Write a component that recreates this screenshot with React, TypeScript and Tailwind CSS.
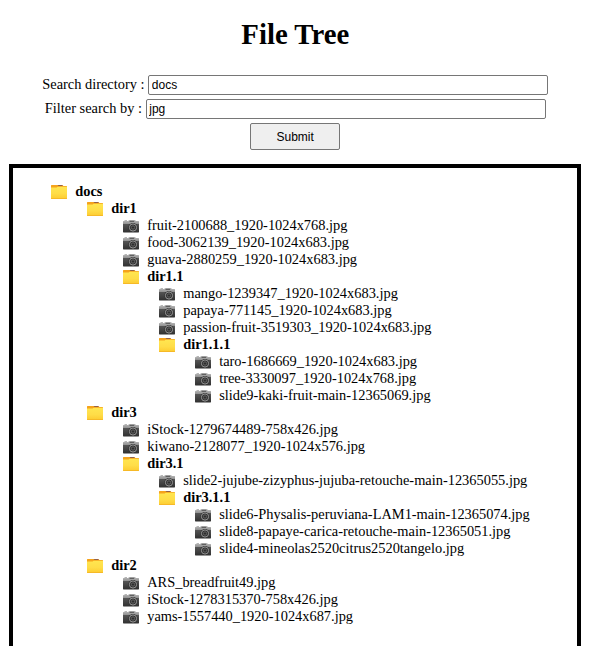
type Node = { name: string; children?: Node[] };

const tree: Node = {
  name: 'docs',
  children: [
    {
      name: 'dir1',
      children: [
        { name: 'fruit-2100688_1920-1024x768.jpg' },
        { name: 'food-3062139_1920-1024x683.jpg' },
        { name: 'guava-2880259_1920-1024x683.jpg' },
        {
          name: 'dir1.1',
          children: [
            { name: 'mango-1239347_1920-1024x683.jpg' },
            { name: 'papaya-771145_1920-1024x683.jpg' },
            { name: 'passion-fruit-3519303_1920-1024x683.jpg' },
            {
              name: 'dir1.1.1',
              children: [
                { name: 'taro-1686669_1920-1024x683.jpg' },
                { name: 'tree-3330097_1920-1024x768.jpg' },
                { name: 'slide9-kaki-fruit-main-12365069.jpg' },
              ],
            },
          ],
        },
      ],
    },
    {
      name: 'dir3',
      children: [
        { name: 'iStock-1279674489-758x426.jpg' },
        { name: 'kiwano-2128077_1920-1024x576.jpg' },
        {
          name: 'dir3.1',
          children: [
            { name: 'slide2-jujube-zizyphus-jujuba-retouche-main-12365055.jpg' },
            {
              name: 'dir3.1.1',
              children: [
                { name: 'slide6-Physalis-peruviana-LAM1-main-12365074.jpg' },
                { name: 'slide8-papaye-carica-retouche-main-12365051.jpg' },
                { name: 'slide4-mineolas2520citrus2520tangelo.jpg' },
              ],
            },
          ],
        },
      ],
    },
    {
      name: 'dir2',
      children: [
        { name: 'ARS_breadfruit49.jpg' },
        { name: 'iStock-1278315370-758x426.jpg' },
        { name: 'yams-1557440_1920-1024x687.jpg' },
      ],
    },
  ],
};

function Defs() {
  return (
    <svg className="absolute size-0" aria-hidden="true">
      <defs>
        <linearGradient id="folder" x1="0" y1="0" x2="0" y2="1">
          <stop offset="0" stopColor="#ffe650" />
          <stop offset="0.55" stopColor="#ffdd48" />
          <stop offset="1" stopColor="#fdcb30" />
        </linearGradient>
        <linearGradient id="camTop" x1="0" y1="0" x2="0" y2="1">
          <stop offset="0" stopColor="#bcbcbc" />
          <stop offset="1" stopColor="#909090" />
        </linearGradient>
        <linearGradient id="camBody" x1="0" y1="0" x2="0" y2="1">
          <stop offset="0" stopColor="#555555" />
          <stop offset="1" stopColor="#303030" />
        </linearGradient>
      </defs>
    </svg>
  );
}

function FolderIcon() {
  return (
    <svg width="16" height="17" viewBox="0 0 16 17" className="shrink-0">
      <path d="M0 2.4Q0 2 .4 2H11.5L12.4 3H15.6Q16 3 16 3.4V15H0Z" fill="#f5a31c" />
      <path d="M6.5 2H11L11.8 3H7.5Z" fill="#93604a" />
      <path d="M0 4.4H5.6L6.6 3.8H16V15.5Q16 16 15.5 16H.5Q0 16 0 15.5Z" fill="url(#folder)" />
      <path d="M0 15.2H16V15.6Q16 16 15.5 16H.5Q0 16 0 15.6Z" fill="#f3b324" />
    </svg>
  );
}

function CameraIcon() {
  return (
    <svg width="16" height="17" viewBox="0 0 16 17" className="shrink-0">
      <path d="M1.5 3.3H4V4H1.5Z" fill="#999999" />
      <path d="M0 4.5Q0 4 .5 4H5L6.2 3H12L13 4H15.5Q16 4 16 4.5V7H0Z" fill="url(#camTop)" />
      <path d="M6.8 3.8H11.2V5H6.4Z" fill="#606060" />
      <path d="M0 7H16V14.8Q16 15.4 15.4 15.4H.6Q0 15.4 0 14.8Z" fill="url(#camBody)" />
      <circle cx="10" cy="10.5" r="4.6" fill="#303030" />
      <circle cx="10" cy="10.5" r="3.6" fill="none" stroke="#999999" strokeWidth="1" />
      <circle cx="10" cy="10.5" r="2.5" fill="#2e2e2e" />
      <circle cx="10" cy="10.5" r="1.7" fill="none" stroke="#777777" strokeWidth="0.7" />
    </svg>
  );
}

function TreeItem({ node }: { node: Node }) {
  return (
    <li>
      <div className="flex h-[17px] items-center gap-[8.2px] whitespace-nowrap">
        {node.children ? <FolderIcon /> : <CameraIcon />}
        <span className={node.children ? 'font-bold' : ''}>{node.name}</span>
      </div>
      {node.children && (
        <ul className="pl-9">
          {node.children.map((child) => (
            <TreeItem key={child.name} node={child} />
          ))}
        </ul>
      )}
    </li>
  );
}

function Field({ label, value }: { label: string; value: string }) {
  return (
    <label className="flex h-5 items-center justify-center gap-[3.6px]">
      <span className="pb-0.5">{label}</span>
      <input
        defaultValue={value}
        className="h-5 w-[400px] rounded-[2px] border border-[#767676] bg-white px-[2.7px] font-['Liberation_Sans',Arial,sans-serif] text-[12px] leading-[14px] outline-none"
      />
    </label>
  );
}

export default function App() {
  return (
    <main className="h-[646px] overflow-hidden bg-white px-[9px] font-['Liberation_Serif','Times_New_Roman',serif] text-[14.4px] leading-[17px] text-black">
      <Defs />
      <h1 className="pt-[18px] pl-[0.6px] text-center text-[28.8px] leading-[33px] font-bold">File Tree</h1>
      <form className="mt-6 flex flex-col gap-1 pl-[0.4px]" onSubmit={(e) => e.preventDefault()}>
        <Field label="Search directory :" value="docs" />
        <Field label="Filter search by :" value="jpg" />
        <button className="h-[27px] w-[90px] self-center rounded-[2px] border border-[#767676] bg-[#efefef] pt-px font-['Liberation_Sans',Arial,sans-serif] text-[12px]">
          Submit
        </button>
      </form>
      <section className="mt-3.5 h-[500px] border-4 border-black pt-[15px] pl-[38px]">
        <ul>
          <TreeItem node={tree} />
        </ul>
      </section>
    </main>
  );
}
